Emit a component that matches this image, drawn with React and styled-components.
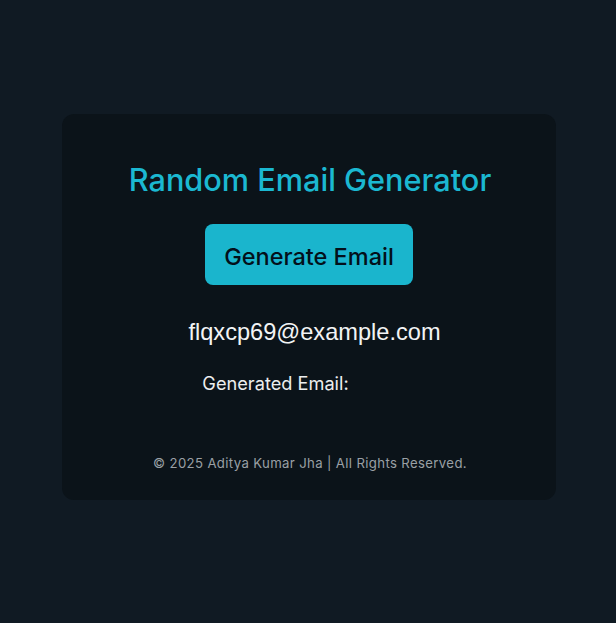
import React from "react";
import styled, { createGlobalStyle } from "styled-components";

const Global = createGlobalStyle`
  html, body { margin: 0; padding: 0; background: #101a23; }
  body { font-family: Inter, "Noto Sans", sans-serif; }
`;

const Page = styled.div`
  width: 616px;
  height: 623px;
  box-sizing: border-box;
  padding-top: 114px;
  display: flex;
  justify-content: center;
  align-items: flex-start;
  background: #101a23;
`;

const Card = styled.div`
  width: 494px;
  height: 386px;
  margin-left: 2px;
  box-sizing: border-box;
  background: #0b1319;
  border-radius: 12px;
  display: flex;
  flex-direction: column;
  align-items: center;
  padding-top: 48px;
`;

const Title = styled.h1`
  margin: 0 0 0 2px;
  font-family: Inter, sans-serif;
  font-weight: 500;
  font-size: 30.7px;
  line-height: 36px;
  color: #1bb8d1;
`;

const Button = styled.button`
  margin-top: 26px;
  width: 208px;
  height: 61px;
  padding: 4px 0 0;
  border: none;
  border-radius: 8px;
  background: #1ab5cd;
  color: #03101a;
  font-family: Inter, sans-serif;
  font-weight: 500;
  font-size: 23.5px;
  cursor: pointer;
`;

const EmailText = styled.div`
  margin-top: 33px;
  margin-left: 11px;
  font-family: "Liberation Sans", Arial, sans-serif;
  font-size: 23.6px;
  line-height: 28px;
  color: #f2f4f5;
`;

const Label = styled.div`
  margin-top: 25px;
  margin-right: 67px;
  font-family: Inter, sans-serif;
  font-size: 18.2px;
  line-height: 24px;
  color: #eceeef;
`;

const Footer = styled.div`
  margin-top: 59px;
  margin-left: 2px;
  font-family: Inter, sans-serif;
  font-size: 13.2px;
  letter-spacing: 0.35px;
  line-height: 18px;
  color: #9aa0a5;
`;

export default function App() {
  return (
    <>
      <Global />
      <Page>
        <Card>
          <Title>Random Email Generator</Title>
          <Button>Generate Email</Button>
          <EmailText>flqxcp69@example.com</EmailText>
          <Label>Generated Email:</Label>
          <Footer>© 2025 Aditya Kumar Jha | All Rights Reserved.</Footer>
        </Card>
      </Page>
    </>
  );
}
